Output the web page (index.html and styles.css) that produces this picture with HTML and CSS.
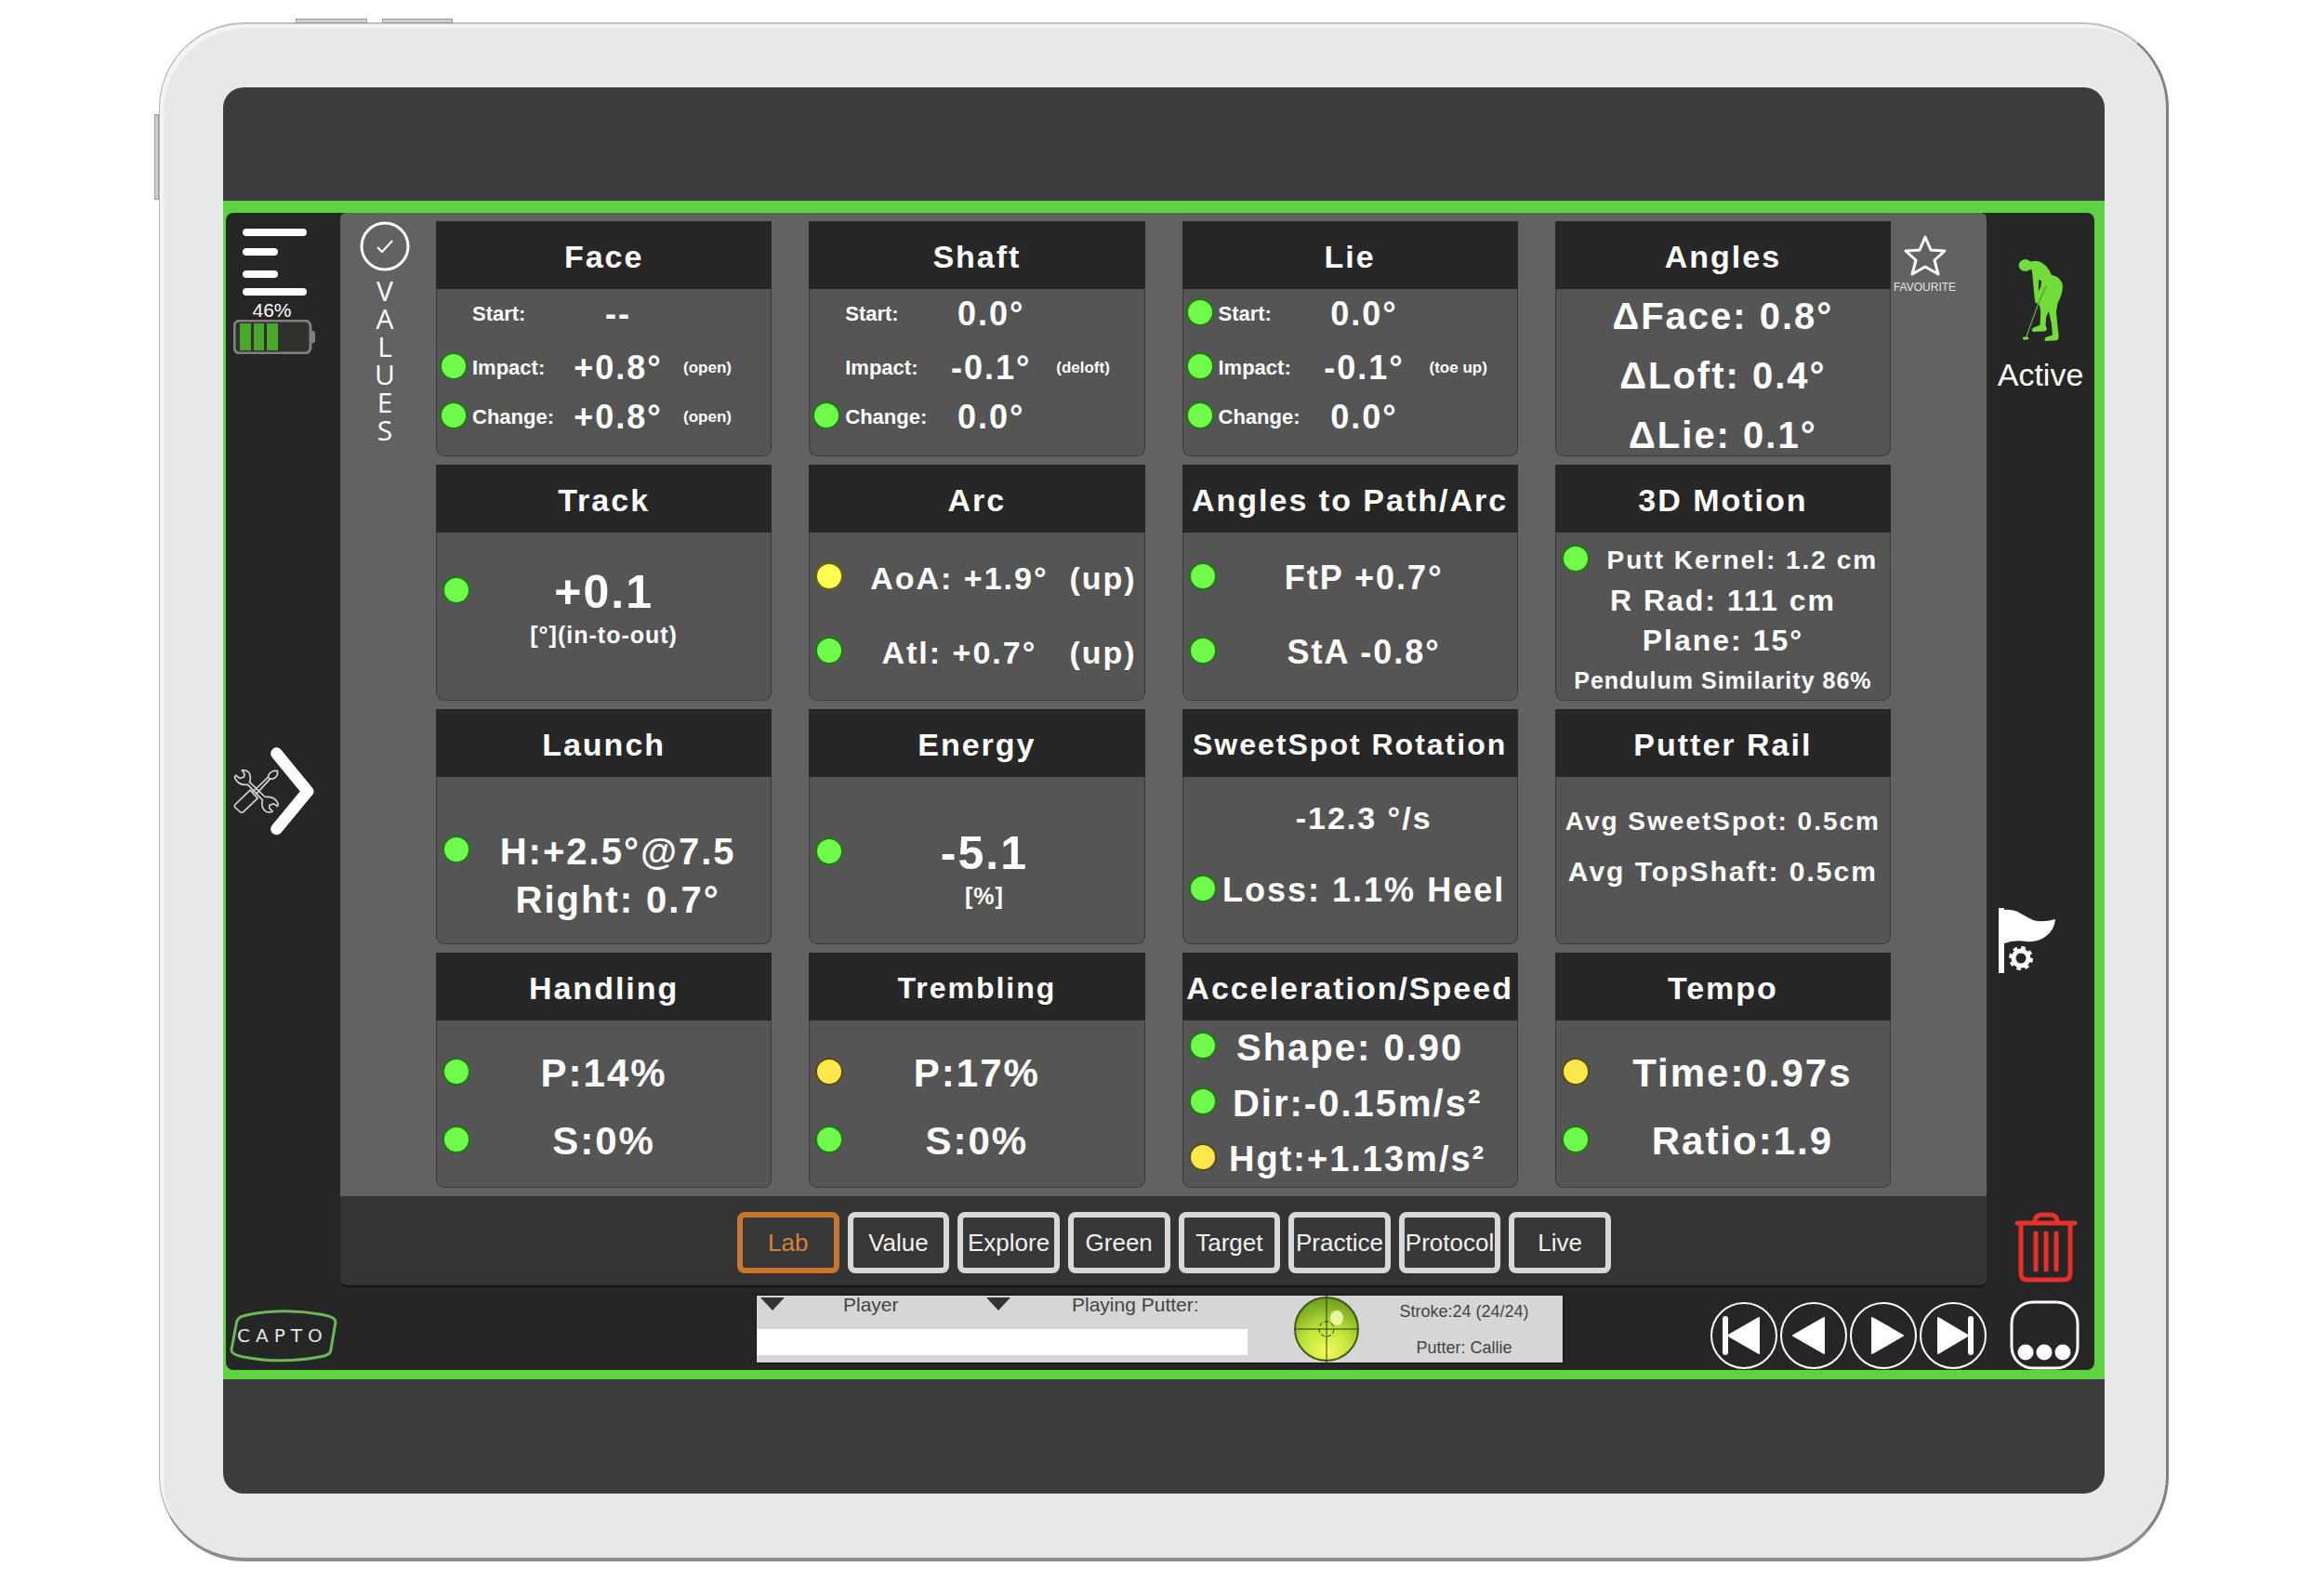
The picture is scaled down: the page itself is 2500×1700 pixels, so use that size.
FILE: index.html
```html
<!DOCTYPE html>
<html lang="en">
<head>
<meta charset="utf-8">
<title>Capto – Lab values</title>
<link rel="stylesheet" href="styles.css">
</head>
<body>
<div class="tablet">
  <span class="side-key side-key--power"></span>
  <span class="side-key side-key--up"></span>
  <span class="side-key side-key--down"></span>
  <div class="screen">
    <div class="frame">
      <div class="app">

        <aside class="rail rail--left">
          <div class="rail-top">
            <button class="icon-button" aria-label="Menu">
              <svg width="71" height="72" viewBox="0 0 71 72" stroke="#fff" stroke-width="8" stroke-linecap="round"><path d="M5 4H66M5 25H35M5 49H35M5 68H66"/></svg>
            </button>
            <span class="battery-level">46%</span>
            <svg class="battery" width="88" height="37" viewBox="0 0 88 37">
              <rect x="1" y="1" width="82" height="35" rx="6" fill="#30302c" stroke="#808080" stroke-width="3"/>
              <path d="M84 12h2q2 0 2 3v7q0 3-2 3h-2z" fill="#808080"/>
              <path d="M7 4h12v29H7zM22 4h11v29H22zM36 4h12v29H36z" fill="#4aa82d"/>
            </svg>
          </div>
          <button class="icon-button tools" aria-label="Open tools">
            <svg width="87" height="95" viewBox="34 40 260 284" fill="none" stroke-linejoin="round" stroke-linecap="round">
              <g stroke="#d2d2d2" stroke-width="5">
                <path d="M62 114Q84 112 88 132Q90 145 86 152L136 200Q168 196 178 222L176 230L164 222L150 226L150 236L160 246Q150 252 138 246Q122 234 128 210L80 160Q48 164 38 136L42 130L54 140L68 136L70 126Z"/>
                <path d="M88 178L40 224Q36 230 40 234L56 248Q62 252 66 248L112 204Z"/>
                <path d="M98 182L146 136M108 190L152 142M146 136Q146 122 164 116L176 116L176 128Q168 144 152 142Z"/>
              </g>
              <path d="M173 60L273 182L173 303" stroke="#fff" stroke-width="38"/>
            </svg>
          </button>
          <div class="logo">
            <svg class="logo-shape" width="116" height="57" viewBox="20 38 348 171" fill="none" stroke="#6cb857" stroke-width="9" stroke-linejoin="round"><path d="M48 68Q55 60 75 56Q195 32 315 54Q362 62 362 78L346 172Q344 182 325 188Q190 216 60 190Q24 182 26 168L42 82Q43 74 48 68Z"/></svg>
            <span class="logo-name">CAPTO</span>
          </div>
        </aside>

        <main class="board">
          <div class="board-side">
            <button class="icon-button" aria-label="Select values">
              <svg width="54" height="54" viewBox="0 0 54 54" fill="none" stroke="#fff"><circle cx="27" cy="27" r="25" stroke-width="3"/><path d="M19 28l5 5l11-12" stroke-width="2"/></svg>
            </button>
            <div class="vertical-title">VALUES</div>
          </div>

          <div class="cards">
            <section class="card">
              <h2 class="card-title">Face</h2>
              <div class="card-body strokes">
                <div class="stroke-row"><span></span><span class="label">Start:</span><span class="value">--</span><span class="note"></span></div>
                <div class="stroke-row"><i class="dot"></i><span class="label">Impact:</span><span class="value">+0.8°</span><span class="note">(open)</span></div>
                <div class="stroke-row"><i class="dot"></i><span class="label">Change:</span><span class="value">+0.8°</span><span class="note">(open)</span></div>
              </div>
            </section>
            <section class="card">
              <h2 class="card-title">Shaft</h2>
              <div class="card-body strokes">
                <div class="stroke-row"><span></span><span class="label">Start:</span><span class="value">0.0°</span><span class="note"></span></div>
                <div class="stroke-row"><span></span><span class="label">Impact:</span><span class="value">-0.1°</span><span class="note">(deloft)</span></div>
                <div class="stroke-row"><i class="dot"></i><span class="label">Change:</span><span class="value">0.0°</span><span class="note"></span></div>
              </div>
            </section>
            <section class="card">
              <h2 class="card-title">Lie</h2>
              <div class="card-body strokes">
                <div class="stroke-row"><i class="dot"></i><span class="label">Start:</span><span class="value">0.0°</span><span class="note"></span></div>
                <div class="stroke-row"><i class="dot"></i><span class="label">Impact:</span><span class="value">-0.1°</span><span class="note">(toe up)</span></div>
                <div class="stroke-row"><i class="dot"></i><span class="label">Change:</span><span class="value">0.0°</span><span class="note"></span></div>
              </div>
            </section>
            <section class="card">
              <h2 class="card-title">Angles</h2>
              <div class="card-body body--angles">
                <p class="line line--full size-40">ΔFace: 0.8°</p>
                <p class="line line--full size-40">ΔLoft: 0.4°</p>
                <p class="line line--full size-40">ΔLie: 0.1°</p>
              </div>
            </section>

            <section class="card">
              <h2 class="card-title">Track</h2>
              <div class="card-body body--track">
                <p class="line size-50"><i class="dot"></i><span>+0.1</span></p>
                <p class="line line--full caption">[°](in-to-out)</p>
              </div>
            </section>
            <section class="card">
              <h2 class="card-title">Arc</h2>
              <div class="card-body body--pair">
                <p class="line line--arc size-34"><i class="dot dot--lemon"></i><span>AoA: +1.9°</span><span>(up)</span></p>
                <p class="line line--arc size-34"><i class="dot"></i><span>Atl: +0.7°</span><span>(up)</span></p>
              </div>
            </section>
            <section class="card">
              <h2 class="card-title">Angles to Path/Arc</h2>
              <div class="card-body body--pair">
                <p class="line line--inset size-36"><i class="dot"></i><span>FtP +0.7°</span></p>
                <p class="line line--inset size-36"><i class="dot"></i><span>StA -0.8°</span></p>
              </div>
            </section>
            <section class="card">
              <h2 class="card-title">3D Motion</h2>
              <div class="card-body body--motion">
                <p class="line line--wide size-28"><i class="dot"></i><span>Putt Kernel: 1.2 cm</span></p>
                <p class="line line--full size-32">R Rad: 111 cm</p>
                <p class="line line--full size-32">Plane: 15°</p>
                <p class="line line--full caption">Pendulum Similarity 86%</p>
              </div>
            </section>

            <section class="card">
              <h2 class="card-title">Launch</h2>
              <div class="card-body body--launch">
                <p class="line line--inset size-40"><i class="dot"></i><span>H:+2.5°@7.5</span></p>
                <p class="line line--inset size-40"><span></span><span>Right: 0.7°</span></p>
              </div>
            </section>
            <section class="card">
              <h2 class="card-title">Energy</h2>
              <div class="card-body body--energy">
                <p class="line line--near size-50"><i class="dot"></i><span>-5.1</span></p>
                <p class="line line--near caption"><span></span><span>[%]</span></p>
              </div>
            </section>
            <section class="card">
              <h2 class="card-title card-title--long">SweetSpot Rotation</h2>
              <div class="card-body body--sweetspot">
                <p class="line line--inset size-34"><span></span><span>-12.3 °/s</span></p>
                <p class="line line--inset size-36"><i class="dot"></i><span>Loss: 1.1% Heel</span></p>
              </div>
            </section>
            <section class="card">
              <h2 class="card-title">Putter Rail</h2>
              <div class="card-body body--rail">
                <p class="line line--full size-28">Avg SweetSpot: 0.5cm</p>
                <p class="line line--full size-30">Avg TopShaft: 0.5cm</p>
              </div>
            </section>

            <section class="card">
              <h2 class="card-title">Handling</h2>
              <div class="card-body body--score">
                <p class="line size-42"><i class="dot"></i><span>P:14%</span></p>
                <p class="line size-42"><i class="dot"></i><span>S:0%</span></p>
              </div>
            </section>
            <section class="card">
              <h2 class="card-title card-title--long">Trembling</h2>
              <div class="card-body body--score">
                <p class="line size-42"><i class="dot dot--amber"></i><span>P:17%</span></p>
                <p class="line size-42"><i class="dot"></i><span>S:0%</span></p>
              </div>
            </section>
            <section class="card">
              <h2 class="card-title">Acceleration/Speed</h2>
              <div class="card-body body--speed">
                <p class="line size-40"><i class="dot"></i><span>Shape: 0.90</span></p>
                <p class="line line--near size-40"><i class="dot"></i><span>Dir:-0.15m/s²</span></p>
                <p class="line line--near size-38"><i class="dot dot--amber"></i><span>Hgt:+1.13m/s²</span></p>
              </div>
            </section>
            <section class="card">
              <h2 class="card-title">Tempo</h2>
              <div class="card-body body--score">
                <p class="line line--wide size-42"><i class="dot dot--amber"></i><span>Time:0.97s</span></p>
                <p class="line line--wide size-42"><i class="dot"></i><span>Ratio:1.9</span></p>
              </div>
            </section>
          </div>

          <button class="icon-button favourite">
            <svg width="46" height="44" viewBox="0 0 46 44" fill="none" stroke="#fff" stroke-width="3" stroke-linejoin="round"><path d="M23 2L29 16L44 17L33 27L37 42L23 34L9 42L13 27L2 17L17 16Z"/></svg>
            <span>FAVOURITE</span>
          </button>
        </main>

        <nav class="tabs">
          <div class="tab-list">
            <button class="tab tab--active">Lab</button>
            <button class="tab">Value</button>
            <button class="tab">Explore</button>
            <button class="tab">Green</button>
            <button class="tab">Target</button>
            <button class="tab">Practice</button>
            <button class="tab">Protocol</button>
            <button class="tab">Live</button>
          </div>
        </nav>

        <footer class="footer">
          <div class="info">
            <div class="info-fields">
              <div class="pickers">
                <div class="picker picker--player">
                  <svg width="26" height="14" viewBox="0 0 26 14"><path d="M0 0H26L13 14Z" fill="#333"/></svg>
                  <select aria-label="Player"><option>Player</option></select>
                </div>
                <div class="picker picker--putter">
                  <svg width="26" height="14" viewBox="0 0 26 14"><path d="M0 0H26L13 14Z" fill="#333"/></svg>
                  <select aria-label="Playing putter"><option>Playing Putter:</option></select>
                </div>
              </div>
              <input class="info-input" type="text" aria-label="Player name">
            </div>
            <svg class="level" width="72" height="72" viewBox="0 0 72 72">
              <defs>
                <radialGradient id="ball" cx="50%" cy="85%" r="85%"><stop offset="0" stop-color="#f4f95a"/><stop offset=".45" stop-color="#bfe63a"/><stop offset="1" stop-color="#6d9a1c"/></radialGradient>
              </defs>
              <circle cx="36" cy="36" r="34" fill="url(#ball)" stroke="#3f5a14" stroke-width="2"/>
              <ellipse cx="47" cy="24" rx="7" ry="8" fill="#f2ffb0" opacity=".85"/>
              <g fill="none" stroke="#2c3a10"><path d="M36 0V72M2 36H70" stroke-width="1"/><circle cx="36" cy="36" r="8" stroke-width="1" stroke-dasharray="5 2"/></g>
            </svg>
            <div class="info-stroke"><span>Stroke:24 (24/24)</span><span>Putter: Callie</span></div>
          </div>
          <div class="player-nav">
            <button class="icon-button" aria-label="First stroke"><svg width="72" height="74" viewBox="0 0 72 74"><circle cx="36" cy="37" r="35" fill="none" stroke="#fff" stroke-width="2"/><path d="M16 19V55" stroke="#fff" stroke-width="6" stroke-linecap="round"/><path d="M19 37L52 18V56Z" fill="#fff" stroke="#fff" stroke-width="2" stroke-linejoin="round"/></svg></button>
            <button class="icon-button" aria-label="Previous stroke"><svg width="72" height="74" viewBox="0 0 72 74"><circle cx="36" cy="37" r="35" fill="none" stroke="#fff" stroke-width="2"/><path d="M14 37L47 18V56Z" fill="#fff" stroke="#fff" stroke-width="2" stroke-linejoin="round"/></svg></button>
            <button class="icon-button" aria-label="Next stroke"><svg width="72" height="74" viewBox="0 0 72 74"><circle cx="36" cy="37" r="35" fill="none" stroke="#fff" stroke-width="2"/><path d="M57 37L24 18V56Z" fill="#fff" stroke="#fff" stroke-width="2" stroke-linejoin="round"/></svg></button>
            <button class="icon-button" aria-label="Last stroke"><svg width="72" height="74" viewBox="0 0 72 74"><circle cx="36" cy="37" r="35" fill="none" stroke="#fff" stroke-width="2"/><path d="M55 19V55" stroke="#fff" stroke-width="6" stroke-linecap="round"/><path d="M52 37L20 18V56Z" fill="#fff" stroke="#fff" stroke-width="2" stroke-linejoin="round"/></svg></button>
          </div>
        </footer>

        <aside class="rail rail--right">
          <button class="icon-button active-player">
            <svg width="49" height="90" viewBox="92 40 146 268" fill="#72dc3a">
              <ellipse cx="115" cy="62" rx="21" ry="19"/>
              <path d="M130 50Q150 46 164 52Q188 64 198 92Q232 102 235 128Q234 155 219 183L214 210L218 252L222 290Q222 302 214 303L180 305Q174 300 180 293L202 286L199 250L190 210L182 228L180 252L184 266Q182 274 170 274L140 275Q132 270 140 263L162 254L164 212L160 190L146 180L143 150L139 105L136 78Q124 76 130 50Z"/>
              <path d="M158 108L167 112L164 132L157 146Z" fill="#262626"/>
              <path d="M182 128L156 186" stroke="#48902a" stroke-width="3" fill="none"/>
              <path d="M156 186L118 292" stroke="#6aa358" stroke-width="4" fill="none"/>
              <ellipse cx="116" cy="296" rx="10" ry="5"/>
            </svg>
            <span>Active</span>
          </button>
          <button class="icon-button flag" aria-label="Target settings">
            <svg width="62" height="71" viewBox="0 0 62 71">
              <path d="M0 0h6v2Q16 1 24 6Q31 10 37 13Q47 16 61 12Q60 24 50 31Q42 37 30 36Q16 34 6 38V70H0Z" fill="#fff"/>
              <g fill="none" stroke="#fff"><circle cx="24" cy="54" r="8" stroke-width="5"/><circle cx="24" cy="54" r="11" stroke-width="4" stroke-dasharray="4.3 4.34"/></g>
            </svg>
          </button>
          <button class="icon-button trash" aria-label="Delete stroke">
            <svg width="68" height="76" viewBox="0 0 68 76" fill="none" stroke="#e8302a" stroke-width="5" stroke-linecap="round"><path d="M3 12H65M7 14V66Q7 73 14 73H53Q60 73 60 66V14M22 11Q22 3 30 3H38Q46 3 46 11M23 23V62M34 23V62M45 23V62"/></svg>
          </button>
          <button class="icon-button" aria-label="More">
            <svg width="75" height="75" viewBox="0 0 75 75"><rect x="2" y="2" width="71" height="71" rx="23" fill="none" stroke="#fff" stroke-width="3"/><g fill="#fff"><circle cx="17" cy="56" r="8.500"/><circle cx="37" cy="56" r="8.500"/><circle cx="57" cy="56" r="8.500"/></g></svg>
          </button>
        </aside>

      </div>
    </div>
  </div>
</div>
</body>
</html>
```
FILE: styles.css
```css
* { box-sizing: border-box; }

body {
  margin: 0;
  padding: 24px 167px 21px 171px;
  background: #fff;
  font-family: "Liberation Sans", Arial, sans-serif;
  color: #fff;
}

/* Tablet shell */
.tablet {
  position: relative;
  padding: 68px 66px 69px 68px;
  border-style: solid;
  border-width: 2px 3px 4px 1px;
  border-color: #bfc1c1 #808080 #8c8c8c #b4b6b6;
  border-radius: 92px;
  background: #e6e8e9;
  box-shadow: inset 4px 4px 1px #f3f4f4;
}

.side-key {
  position: absolute;
  background: #cfcfcf;
  border: 1px solid #999;
}
.side-key--power { left: -6px; top: 97px; width: 5px; height: 92px; }
.side-key--up { left: 146px; top: -6px; width: 77px; height: 5px; }
.side-key--down { left: 239px; top: -6px; width: 76px; height: 5px; }

.screen {
  padding: 122px 0 123px;
  border-radius: 22px;
  background: #3d3d3d;
}

.frame {
  padding: 13px 11px 10px 3px;
  background: #5ed341;
}

.app {
  display: grid;
  grid-template-columns: 123px 1fr 116px;
  grid-template-areas:
    "left board right"
    "left tabs right"
    "left footer right";
  border-radius: 8px;
  background: #262626;
}

.icon-button {
  display: block;
  padding: 0;
  border: 0;
  background: none;
  color: inherit;
  font: inherit;
  cursor: pointer;
}

svg { display: block; }

/* Side rails */
.rail--left {
  grid-area: left;
  display: grid;
  grid-template-rows: 1fr auto 1fr;
  padding: 8px 0 8px 4px;
}
.rail-top {
  display: grid;
  align-content: start;
  justify-items: start;
  padding: 9px 0 0 4px;
}
.rail-top .icon-button { margin-left: 9px; }
.battery-level {
  width: 83px;
  padding-top: 5px;
  font-size: 21px;
  line-height: 21px;
  text-align: center;
}
.tools { padding-left: 4px; }

.logo {
  position: relative;
  align-self: end;
  width: 116px;
  height: 57px;
}
.logo-shape { position: absolute; inset: 0; }
.logo-name {
  position: relative;
  display: block;
  font-family: "DejaVu Sans", sans-serif;
  font-size: 20px;
  line-height: 56px;
  letter-spacing: 6px;
  padding-left: 8px;
  color: #e4e4e4;
}

.rail--right {
  grid-area: right;
  display: flex;
  flex-direction: column;
  align-items: center;
  padding-top: 49px;
}
.active-player {
  display: grid;
  justify-items: center;
  gap: 15px;
  font-size: 34px;
  line-height: 40px;
}
.flag {
  align-self: flex-start;
  margin: auto 0 256px 13px;
}
.trash { margin: 0 0 19px 11px; }
.trash + .icon-button { margin-left: 8px; }

/* Board */
.board {
  grid-area: board;
  display: grid;
  grid-template-columns: 103px 1fr 103px;
  padding: 9px 0;
  border-radius: 6px 6px 0 0;
  background: #626262;
}
.board-side {
  display: flex;
  flex-direction: column;
  align-items: center;
  gap: 6px;
  padding-right: 7px;
}
/* One letter fits on each line, so the word reads downwards */
.vertical-title {
  width: 24px;
  font-family: "Open Sans", sans-serif;
  font-size: 30px;
  line-height: 30px;
  text-align: center;
  word-break: break-all;
}
.favourite {
  display: grid;
  align-content: start;
  justify-items: center;
  gap: 5px;
  width: 73px;
  padding-top: 15px;
  font-size: 12px;
  line-height: 14px;
  color: #e6e6e6;
}

.cards {
  display: grid;
  grid-template-columns: repeat(4, minmax(0, 1fr));
  gap: 9px 40px;
}
.card {
  display: grid;
  grid-template-rows: 73px minmax(180px, auto);
}
.card-title {
  margin: 0;
  padding-top: 3px;
  background: #272727;
  font-size: 34px;
  line-height: 70px;
  letter-spacing: 2px;
  text-align: center;
  white-space: nowrap;
}
.card-title--long { font-size: 32px; }
.card-body {
  display: grid;
  align-content: start;
  border: 1px solid #3a3a3a;
  border-top: 0;
  border-radius: 0 0 9px 9px;
  background: #555;
  font-weight: bold;
}

.dot {
  width: 30px;
  height: 30px;
  margin-bottom: 4px;
  justify-self: center;
  border: 2px solid #1d7a12;
  border-radius: 50%;
  background: #70fb4c;
}
.dot--lemon { background: #ffff52; border-color: #6b6410; }
.dot--amber { background: #fce74c; border-color: #5a4a18; }

/* Start / impact / change cards */
.strokes { grid-template-rows: 54px 62px 44px; }
.stroke-row {
  display: grid;
  grid-template-columns: 36px 105px 108px 1fr;
  align-items: center;
}
.stroke-row .label { padding-left: 2px; font-size: 22px; }
.stroke-row .value { font-size: 36px; letter-spacing: 2px; text-align: center; }
.stroke-row .note { padding-left: 16px; font-size: 17px; }

/* Centred readings */
.line {
  display: grid;
  grid-template-columns: 42px 1fr 42px;
  align-items: center;
  margin: 0;
  line-height: 44px;
  letter-spacing: 2px;
  text-align: center;
  white-space: nowrap;
}
.line--near { grid-template-columns: 42px 1fr 26px; }
.line--inset { grid-template-columns: 42px 1fr 12px; }
.line--wide { grid-template-columns: 42px 1fr; }
.line--arc { grid-template-columns: 42px 1fr 64px; padding-right: 16px; }
.line--full { display: block; }

.size-28 { font-size: 28px; }
.size-30 { font-size: 30px; }
.size-32 { font-size: 32px; }
.size-34 { font-size: 34px; }
.size-36 { font-size: 36px; }
.size-38 { font-size: 38px; }
.size-40 { font-size: 40px; }
.size-42 { font-size: 42px; }
.size-50 { font-size: 50px; }
.caption { font-size: 25px; letter-spacing: 1px; }

.body--angles { padding-top: 7px; gap: 20px; }
.body--track { padding-top: 42px; gap: 2px; }
.body--pair { padding-top: 27px; gap: 36px; }
.body--motion { padding-top: 9px; gap: 1px; }
.body--motion .line { line-height: 42px; }
.body--launch { padding-top: 58px; gap: 8px; }
.body--energy { padding-top: 60px; gap: 2px; }
.body--sweetspot { padding-top: 22px; gap: 34px; }
.body--rail { padding-top: 26px; gap: 10px; }
.body--score { padding-top: 35px; gap: 29px; }
.body--speed { padding-top: 7px; gap: 16px; }

/* Tabs */
.tabs {
  grid-area: tabs;
  padding: 17px 0 13px 23px;
  border-bottom: 2px solid #141414;
  border-radius: 0 0 8px 8px;
  background: #343434;
}
.tab-list {
  display: grid;
  grid-template-columns: repeat(8, 1fr);
  gap: 9px;
  max-width: 940px;
  margin: 0 auto;
}
.tab {
  height: 66px;
  padding: 0;
  border: 6px solid #d8d8d8;
  border-radius: 8px;
  background: #383838;
  color: #f2f2f2;
  font-family: inherit;
  font-size: 26px;
  cursor: pointer;
}
.tab--active { border-color: #c87530; color: #d3843c; }

/* Footer */
.footer {
  grid-area: footer;
  display: grid;
  grid-template-columns: 447fr 869px 455fr;
  align-items: end;
  padding-top: 8px;
}
.info {
  grid-column: 2;
  display: grid;
  grid-template-columns: 528px 121px 1fr;
  height: 74px;
  margin-bottom: 7px;
  border: 1px solid #111;
  background: #d6d6d6;
  color: #444;
}
.pickers { display: grid; grid-template-columns: 243px 1fr; }
.picker { display: flex; align-items: flex-start; padding-left: 4px; }
.picker svg { margin-top: 2px; }
.picker select {
  appearance: none;
  height: 24px;
  margin-top: -2px;
  padding: 0;
  border: 0;
  background: none;
  color: inherit;
  font-family: inherit;
  font-size: 21px;
  line-height: 24px;
}
.picker--player select { margin-left: 63px; }
.picker--putter select { margin-left: 66px; }
.info-fields { display: grid; grid-template-rows: 36px 28px; }
.info-input {
  width: 100%;
  padding: 0 8px;
  border: 0;
  background: #fff;
  font-size: 21px;
}
.level { justify-self: end; }
.info-stroke {
  display: grid;
  align-content: center;
  justify-items: center;
  gap: 21px;
  padding-left: 6px;
  font-size: 18px;
  line-height: 18px;
}
.player-nav {
  display: flex;
  justify-content: flex-end;
  gap: 3px;
}
```
